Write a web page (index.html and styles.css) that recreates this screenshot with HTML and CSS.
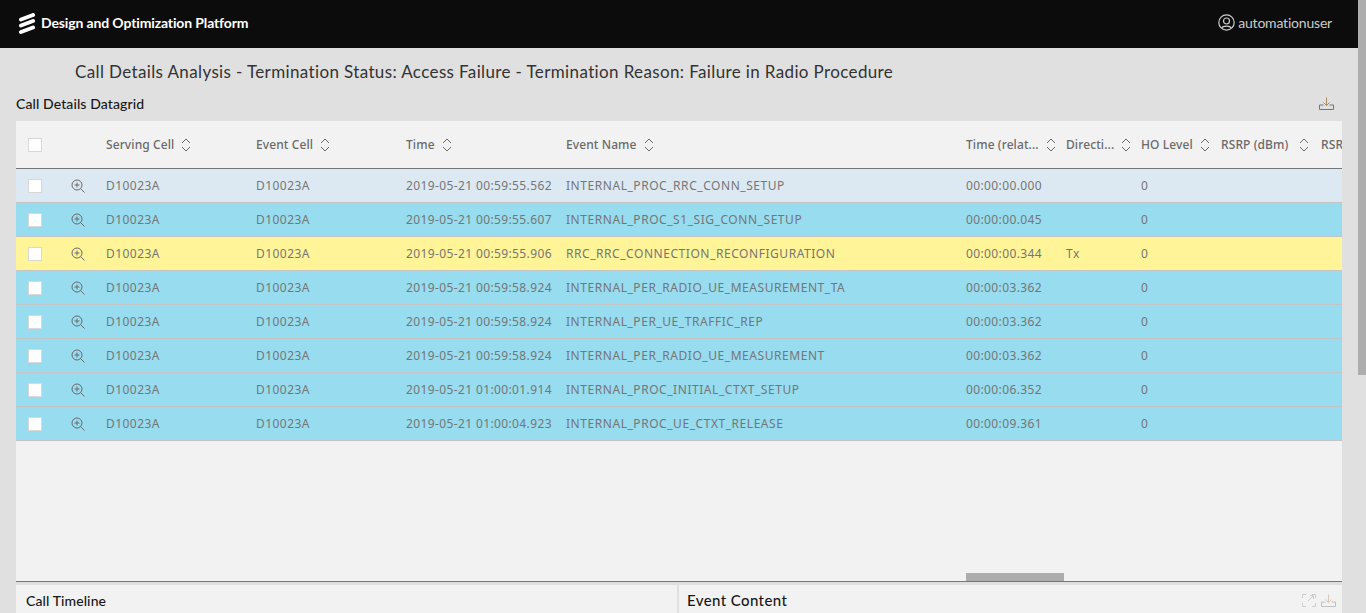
FILE: index.html

```html
<!DOCTYPE html>
<html lang="en">

<head>
    <meta charset="UTF-8">
    <meta name="viewport" content="width=device-width, initial-scale=1.0">
    <title>Call Details Analysis</title>
    <link rel="stylesheet" href="styles.css">
</head>

<body>
    <svg class="defs" width="0" height="0">
        <symbol id="sort" viewBox="0 0 10 14">
            <path d="M1 5l4-4 4 4M1 9l4 4 4-4" fill="none" stroke="currentColor" stroke-width="1"/>
        </symbol>
        <symbol id="zoom" viewBox="0 0 14 14">
            <circle cx="6" cy="6" r="5" fill="none" stroke="currentColor"/>
            <path d="M9.700 9.700l3.800 3.800M6 3.500v5M3.500 6h5" fill="none" stroke="currentColor"/>
        </symbol>
        <symbol id="download" viewBox="0 0 15 13">
            <path d="M.5 8v4.500h14V8h-4M4.500 8h-4" fill="none" stroke="#777"/>
            <path d="M7.500 .5v8M4.500 5.500l3 3 3-3" fill="none" stroke="#b08a5a"/>
        </symbol>
    </svg>

    <header class="topbar">
        <div class="brand">
            <svg class="logo" width="18" height="22" viewBox="0 0 18 22">
                <path d="M3 6.500L15 2M3 12.500L15 8M3 19L15 14.500" fill="none" stroke="#fff" stroke-width="4" stroke-linecap="round"/>
            </svg>
            <span>Design and Optimization Platform</span>
        </div>
        <div class="user">
            <svg width="17" height="17" viewBox="0 0 17 17">
                <circle cx="8.500" cy="8.500" r="7.700" fill="none" stroke="#ccc" stroke-width="1.200"/>
                <circle cx="8.500" cy="7" r="3" fill="none" stroke="#ccc" stroke-width="1.200"/>
                <path d="M3.800 14c1-2.500 8.400-2.500 9.400 0" fill="none" stroke="#ccc" stroke-width="1.200"/>
            </svg>
            <span>automationuser</span>
        </div>
    </header>

    <main class="page">
        <h1 class="page-title">Call Details Analysis - Termination Status: Access Failure - Termination Reason: Failure in Radio Procedure</h1>

        <div class="section-head">
            <h2>Call Details Datagrid</h2>
            <svg class="tool" width="15" height="13"><use href="#download"/></svg>
        </div>

        <div class="grid-card">
            <table class="grid">
                <colgroup>
                    <col class="c-check"><col class="c-zoom"><col class="c-cell"><col class="c-cell">
                    <col class="c-time"><col class="c-name"><col class="c-rel"><col class="c-dir">
                    <col class="c-ho"><col class="c-rsrp"><col class="c-rsrp">
                </colgroup>
                <thead>
                    <tr>
                        <th><span class="check"></span></th>
                        <th></th>
                        <th>Serving Cell<svg class="sort"><use href="#sort"/></svg></th>
                        <th>Event Cell<svg class="sort"><use href="#sort"/></svg></th>
                        <th>Time<svg class="sort"><use href="#sort"/></svg></th>
                        <th>Event Name<svg class="sort"><use href="#sort"/></svg></th>
                        <th>Time (relat...<svg class="sort"><use href="#sort"/></svg></th>
                        <th>Directi...<svg class="sort"><use href="#sort"/></svg></th>
                        <th>HO Level<svg class="sort"><use href="#sort"/></svg></th>
                        <th>RSRP (dBm)<svg class="sort sort-wide"><use href="#sort"/></svg></th>
                        <th>RSRQ (dB)<svg class="sort"><use href="#sort"/></svg></th>
                    </tr>
                </thead>
                <tbody>
                    <tr class="row-first">
                        <td><span class="check"></span></td>
                        <td><svg class="zoom"><use href="#zoom"/></svg></td>
                        <td>D10023A</td><td>D10023A</td><td class="time">2019-05-21 00:59:55.562</td>
                        <td class="name">INTERNAL_PROC_RRC_CONN_SETUP</td><td class="time">00:00:00.000</td><td></td><td>0</td><td></td><td></td>
                    </tr>
                    <tr class="row-blue">
                        <td><span class="check"></span></td>
                        <td><svg class="zoom"><use href="#zoom"/></svg></td>
                        <td>D10023A</td><td>D10023A</td><td class="time">2019-05-21 00:59:55.607</td>
                        <td class="name">INTERNAL_PROC_S1_SIG_CONN_SETUP</td><td class="time">00:00:00.045</td><td></td><td>0</td><td></td><td></td>
                    </tr>
                    <tr class="row-yellow">
                        <td><span class="check"></span></td>
                        <td><svg class="zoom"><use href="#zoom"/></svg></td>
                        <td>D10023A</td><td>D10023A</td><td class="time">2019-05-21 00:59:55.906</td>
                        <td class="name">RRC_RRC_CONNECTION_RECONFIGURATION</td><td class="time">00:00:00.344</td><td>Tx</td><td>0</td><td></td><td></td>
                    </tr>
                    <tr class="row-blue">
                        <td><span class="check"></span></td>
                        <td><svg class="zoom"><use href="#zoom"/></svg></td>
                        <td>D10023A</td><td>D10023A</td><td class="time">2019-05-21 00:59:58.924</td>
                        <td class="name">INTERNAL_PER_RADIO_UE_MEASUREMENT_TA</td><td class="time">00:00:03.362</td><td></td><td>0</td><td></td><td></td>
                    </tr>
                    <tr class="row-blue">
                        <td><span class="check"></span></td>
                        <td><svg class="zoom"><use href="#zoom"/></svg></td>
                        <td>D10023A</td><td>D10023A</td><td class="time">2019-05-21 00:59:58.924</td>
                        <td class="name">INTERNAL_PER_UE_TRAFFIC_REP</td><td class="time">00:00:03.362</td><td></td><td>0</td><td></td><td></td>
                    </tr>
                    <tr class="row-blue">
                        <td><span class="check"></span></td>
                        <td><svg class="zoom"><use href="#zoom"/></svg></td>
                        <td>D10023A</td><td>D10023A</td><td class="time">2019-05-21 00:59:58.924</td>
                        <td class="name">INTERNAL_PER_RADIO_UE_MEASUREMENT</td><td class="time">00:00:03.362</td><td></td><td>0</td><td></td><td></td>
                    </tr>
                    <tr class="row-blue">
                        <td><span class="check"></span></td>
                        <td><svg class="zoom"><use href="#zoom"/></svg></td>
                        <td>D10023A</td><td>D10023A</td><td class="time">2019-05-21 01:00:01.914</td>
                        <td class="name">INTERNAL_PROC_INITIAL_CTXT_SETUP</td><td class="time">00:00:06.352</td><td></td><td>0</td><td></td><td></td>
                    </tr>
                    <tr class="row-blue">
                        <td><span class="check"></span></td>
                        <td><svg class="zoom"><use href="#zoom"/></svg></td>
                        <td>D10023A</td><td>D10023A</td><td class="time">2019-05-21 01:00:04.923</td>
                        <td class="name">INTERNAL_PROC_UE_CTXT_RELEASE</td><td class="time">00:00:09.361</td><td></td><td>0</td><td></td><td></td>
                    </tr>
                </tbody>
            </table>
            <div class="h-thumb"></div>
        </div>

        <div class="panels">
            <section class="panel">
                <h2>Call Timeline</h2>
            </section>
            <section class="panel">
                <h2 class="panel-big">Event Content</h2>
                <div class="panel-tools">
                    <svg width="14" height="13" viewBox="0 0 14 13">
                        <path d="M.5 4V.5H4M10 .5h3.500V4M.5 9v3.500H4M10 12.500h3.500V9M6 7l5-5M8 1.500h3.500V5" fill="none" stroke="#ccc"/>
                    </svg>
                    <svg class="faded" width="15" height="13"><use href="#download"/></svg>
                </div>
            </section>
        </div>
    </main>

    <div class="v-thumb"></div>
</body>
</html>
```

FILE: styles.css

```css
html, body {
    margin: 0;
    height: 613px;
    overflow: hidden;
}

body {
    background-color: #e0e0e0;
    font-family: "Lato", "Noto Sans", sans-serif;
    color: #242424;
}

.defs {
    position: absolute;
}

.topbar {
    height: 48px;
    background-color: #0c0c0c;
    display: flex;
    align-items: center;
    justify-content: space-between;
    padding: 0 26px 4px 18px;
    box-sizing: border-box;
    margin-right: 8px;
}

.brand {
    display: flex;
    align-items: center;
    gap: 5px;
    color: #fff;
    font-size: 14px;
    font-weight: 700;
    letter-spacing: -.13px;
}

.logo {
    margin-top: 4px;
}

.user {
    display: flex;
    align-items: center;
    gap: 3px;
    color: #ccc;
    font-size: 14px;
    letter-spacing: -.2px;
}

.page {
    padding: 0 24px 0 16px;
}

.page-title {
    margin: 0;
    padding: 13px 0 1px 59px;
    font-size: 17px;
    font-weight: 400;
    line-height: 21px;
    height: 21px;
    color: #333;
    letter-spacing: .37px;
}

.section-head {
    display: flex;
    align-items: center;
    justify-content: space-between;
    height: 38px;
    padding: 3px 8px 0 0;
    box-sizing: border-box;
}

.section-head h2,
.panel h2 {
    margin: 0;
    font-size: 14px;
    font-weight: 500;
    color: #181818;
    letter-spacing: .1px;
}

.grid-card {
    position: relative;
    height: 460px;
    background-color: #f2f2f2;
    border-bottom: 1px solid #767676;
    overflow: hidden;
}

.grid {
    border-collapse: collapse;
    table-layout: fixed;
    width: 1405px;
    font-family: "Noto Sans", sans-serif;
    font-size: 12px;
}

.c-check { width: 40px; }
.c-zoom { width: 50px; }
.c-cell { width: 150px; }
.c-time { width: 160px; }
.c-name { width: 400px; }
.c-rel { width: 100px; }
.c-dir { width: 75px; }
.c-ho { width: 80px; }
.c-rsrp { width: 100px; }

.grid th {
    height: 47px;
    padding: 1px 0 0;
    box-sizing: border-box;
    border-bottom: 1px solid #767676;
    text-align: left;
    font-weight: 500;
    color: #6a6a6a;
    white-space: nowrap;
    letter-spacing: .1px;
}

.grid td {
    height: 34px;
    padding: 0;
    box-sizing: border-box;
    border-bottom: 1px solid #c4c4c4;
    color: #767676;
    white-space: nowrap;
    letter-spacing: .45px;
}

.grid td.time {
    letter-spacing: .38px;
}

.grid td.name {
    letter-spacing: .55px;
}

.row-first { background-color: #dce9f2; }
.row-blue { background-color: #97dcef; }
.row-yellow { background-color: #fff498; }

.check {
    display: block;
    width: 12px;
    height: 12px;
    margin: 2px 0 0 12px;
    background-color: #fff;
    border: 1px solid #d8d8d8;
}

.grid th .check {
    margin-top: 0;
}

.sort {
    width: 10px;
    height: 14px;
    margin-left: 7px;
    vertical-align: -3px;
    color: #6a6a6a;
}

.sort-wide {
    margin-left: 11px;
}

.zoom {
    display: block;
    width: 14px;
    height: 14px;
    margin: 2px 0 0 15px;
    color: #6a6a6a;
}

.h-thumb {
    position: absolute;
    left: 950px;
    bottom: 0;
    width: 98px;
    height: 8px;
    background-color: #adadad;
}

.panels {
    display: grid;
    grid-template-columns: 661px 663px;
    gap: 2px;
    margin-top: 3px;
}

.panel {
    display: flex;
    align-items: center;
    justify-content: space-between;
    height: 40px;
    padding: 0 6px 10px 10px;
    box-sizing: border-box;
    background-color: #f2f2f2;
}

.panel .panel-big {
    font-size: 15px;
    margin-left: -2px;
    letter-spacing: .4px;
}

.panel-tools {
    display: flex;
    gap: 5px;
}

.faded {
    opacity: .4;
}

.v-thumb {
    position: absolute;
    top: 0;
    right: 0;
    width: 8px;
    height: 375px;
    background-color: #adadad;
}
```
